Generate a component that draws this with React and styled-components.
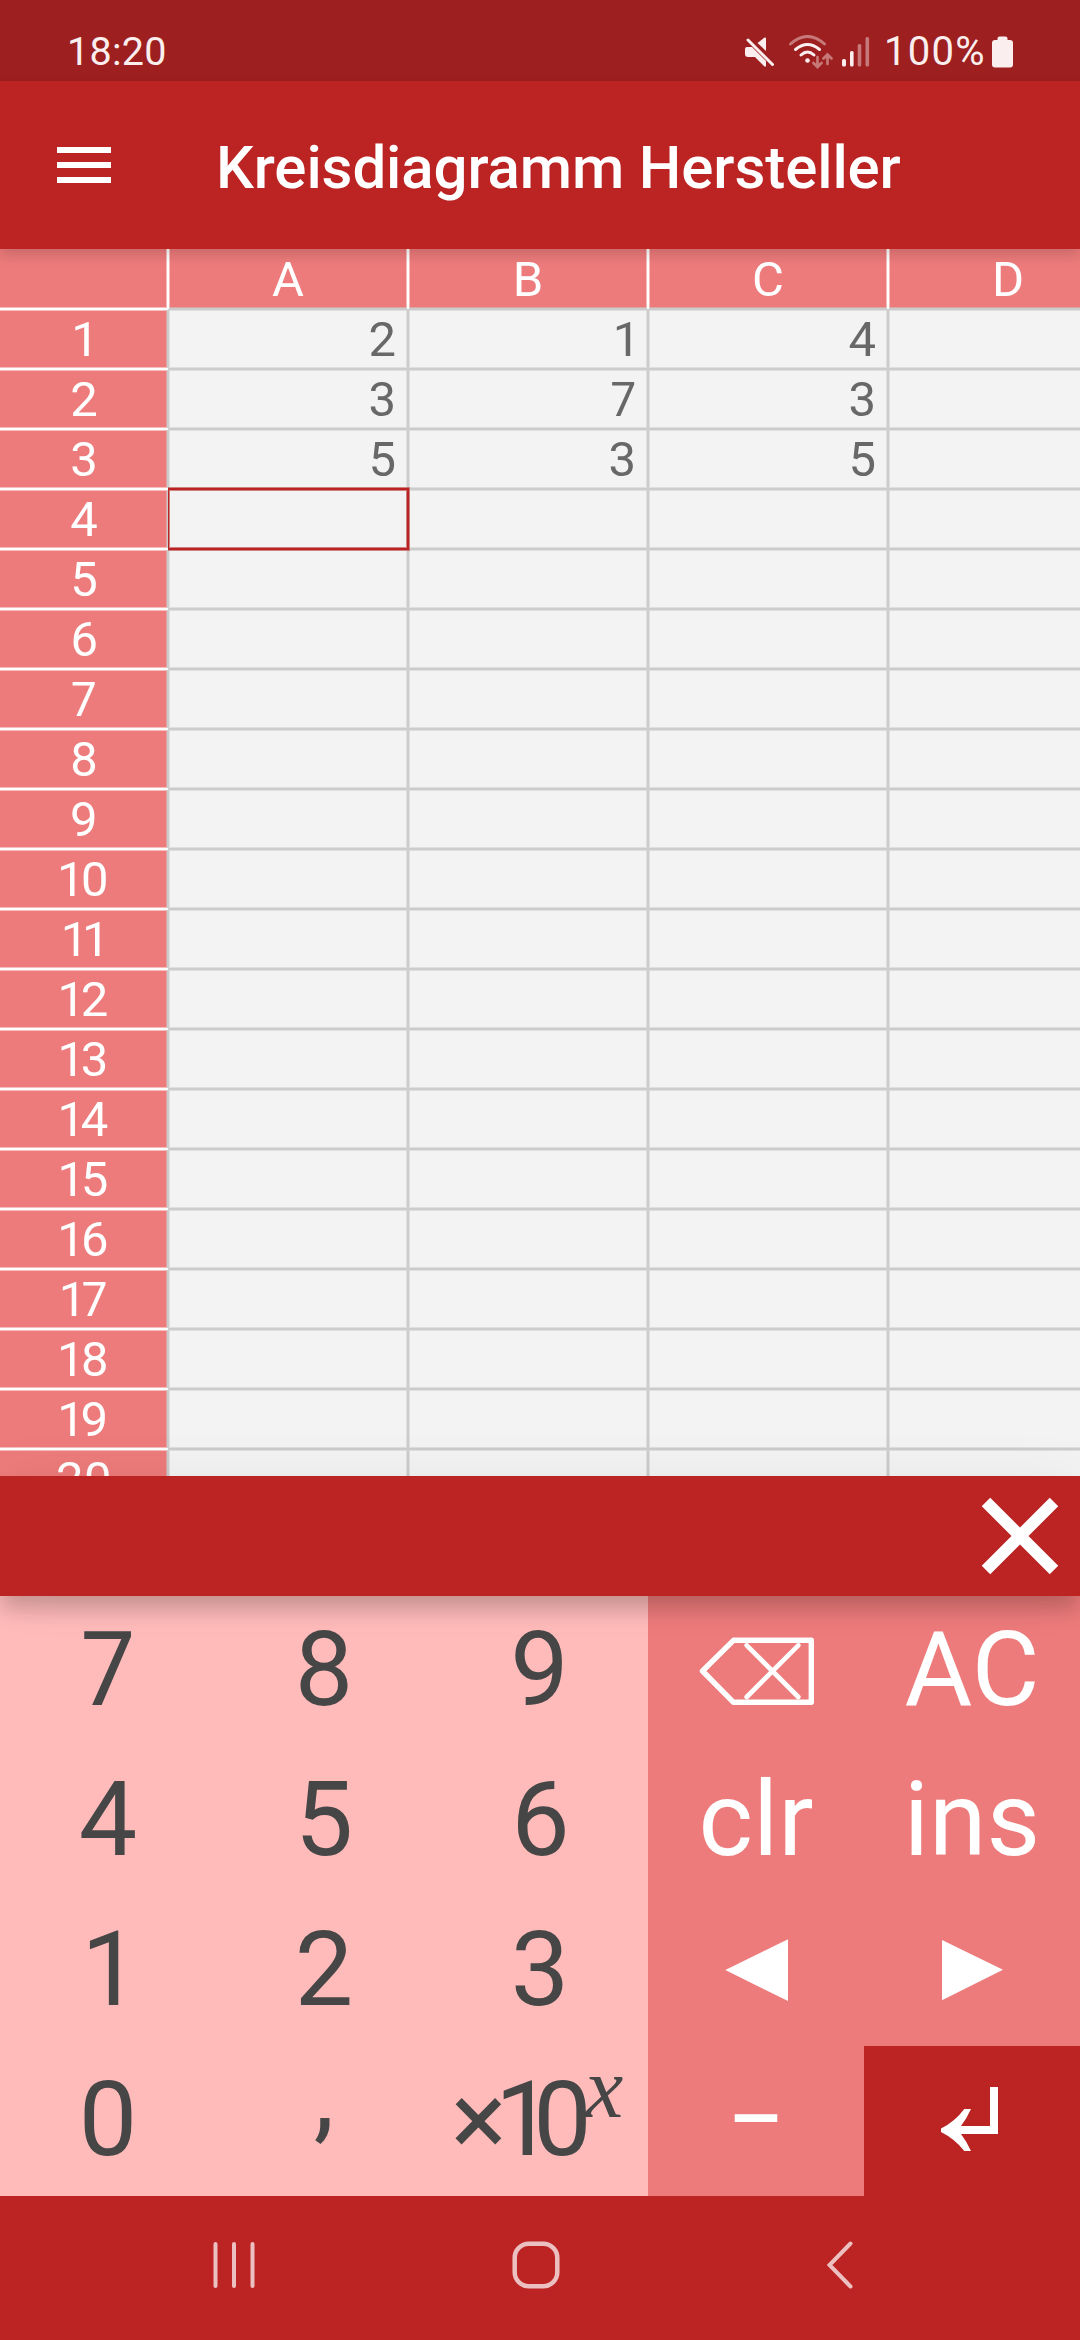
import React, { useState } from "react";
import styled, { createGlobalStyle, css } from "styled-components";

const GlobalStyle = createGlobalStyle`
  body {
    margin: 0;
    background: #bc2323;
  }

  * {
    box-sizing: border-box;
  }
`;

const COLUMNS = ["A", "B", "C", "D"];
const ROW_COUNT = 20;

// values of the filled rows, the rest of the sheet is empty
const DATA = [
  ["2", "1", "4"],
  ["3", "7", "3"],
  ["5", "3", "5"],
];

const NUMBER_KEYS = ["7", "8", "9", "4", "5", "6", "1", "2", "3", "0"];

function StatusBar() {
  return (
    <Status>
      <Clock>18:20</Clock>
      <StatusIcons>
        <svg width="30" height="30" viewBox="0 0 30 30" fill="#faeeee">
          <path d="M12.500 6 19.500 0.500Q21 0 21 1.500V14Z" />
          <path d="M3 3 27.500 27.500" stroke="#9d1f1f" strokeWidth="6" />
          <path d="M2 10H7L21 24V29.500H19.500L10 20H3Q0 20 0 17V12Q0 10 2 10Z" />
          <path d="M3 3 27.500 27.500" stroke="#faeeee" strokeWidth="3" strokeLinecap="round" />
        </svg>
        <WifiIcon width="44" height="34" viewBox="0 0 44 34" fill="none" strokeLinecap="round">
          <path d="M1.500 9Q18.500 -6 35.500 9" stroke="#c77878" strokeWidth="3" />
          <path d="M6.500 14.500Q18.500 4.500 30.500 14.500" stroke="#faeeee" strokeWidth="3" />
          <path d="M12 20Q18.500 14 25 20" stroke="#faeeee" strokeWidth="3" />
          <circle cx="18.500" cy="25.500" r="2.300" fill="#faeeee" />
          <path
            d="M28.500 22V31.500M24.500 28 28.500 32 32.500 28M38.500 29V19.500M34.500 23.500 38.500 19.500 42.500 23.500"
            stroke="#c77878"
            strokeWidth="2.700"
          />
        </WifiIcon>
        <SignalIcon width="28" height="30" viewBox="0 0 28 30">
          <rect x="0" y="22" width="4" height="7.500" rx="1.500" fill="#faeeee" />
          <rect x="8" y="14" width="3.600" height="15.500" rx="1.500" fill="#faeeee" />
          <rect x="15.700" y="7" width="3.600" height="22.500" rx="1.500" fill="#c77878" />
          <rect x="23.500" y="0" width="3.600" height="29.500" rx="1.500" fill="#c77878" />
        </SignalIcon>
        <Percent>100%</Percent>
        <svg width="21" height="32" viewBox="0 0 21 32" fill="#faeeee">
          <rect x="5.500" y="0.500" width="10" height="8" rx="2" />
          <rect x="0" y="4" width="21" height="27.500" rx="3" />
        </svg>
      </StatusIcons>
    </Status>
  );
}

function Sheet() {
  // row and column of the cell that is being edited
  const [selected, setSelected] = useState({ row: 3, col: 0 });

  return (
    <Grid>
      <Corner />
      {COLUMNS.map((name) => (
        <ColumnHead key={name}>{name}</ColumnHead>
      ))}
      {Array.from({ length: ROW_COUNT }, (_, row) => (
        <React.Fragment key={row}>
          <RowHead>{row + 1}</RowHead>
          {COLUMNS.map((name, col) => (
            <Cell key={name} onClick={() => setSelected({ row, col })}>
              {DATA[row] && DATA[row][col]}
              {selected.row === row && selected.col === col && <Selection />}
            </Cell>
          ))}
        </React.Fragment>
      ))}
    </Grid>
  );
}

function Keypad() {
  return (
    <Keys>
      <NumberPad>
        {NUMBER_KEYS.map((key) => (
          <Key key={key}>{key}</Key>
        ))}
        <CommaKey>,</CommaKey>
        <PowerKey>
          <Times>×</Times>
          <Ten>10</Ten>
          <Exponent>x</Exponent>
        </PowerKey>
      </NumberPad>
      <ActionPad>
        <IconKey aria-label="backspace">
          <svg width="116" height="70" viewBox="0 0 116 70" fill="none" stroke="#fff">
            <path d="M4.500 35 35.500 4.300H113.300V66.300H35.500Z" strokeWidth="5.400" strokeLinejoin="round" />
            <path d="M48.700 9.300 100.300 61M100.300 9.300 48.700 61" strokeWidth="4.700" strokeLinecap="round" />
          </svg>
        </IconKey>
        <Key light>AC</Key>
        <Key light>clr</Key>
        <Key light>ins</Key>
        <IconKey aria-label="left">
          <svg width="64" height="64" viewBox="0 0 64 64" fill="#fff">
            <path d="M1.300 31 64 0.300V62Z" />
          </svg>
        </IconKey>
        <IconKey aria-label="right">
          <svg width="62" height="62" viewBox="0 0 62 62" fill="#fff">
            <path d="M1 0 62 29.800 1 60.200Z" />
          </svg>
        </IconKey>
        <MinusKey>−</MinusKey>
        <IconKey dark aria-label="enter">
          <svg width="62" height="70" viewBox="0 0 62 70" fill="#fff">
            <path d="M49 1H57V48H20Q26 56 30 65H23.300Q14 53 0 46V42.500Q14 35.500 23.300 23H30Q26 32 20 40H49Z" />
          </svg>
        </IconKey>
      </ActionPad>
    </Keys>
  );
}

function App() {
  return (
    <Screen>
      <GlobalStyle />
      <StatusBar />
      <Header>
        <Hamburger>
          <span />
          <span />
          <span />
        </Hamburger>
        <Title>Kreisdiagramm Hersteller</Title>
      </Header>
      <Sheet />
      <EditBar>
        <svg width="78" height="78" viewBox="0 0 78 78" stroke="#fff" strokeWidth="12">
          <path d="M5 5 73 73M73 5 5 73" />
        </svg>
      </EditBar>
      <Keypad />
      <NavBar>
        <svg width="42" height="48" viewBox="0 0 42 48" stroke="#ecc0c0" strokeWidth="4" strokeLinecap="round">
          <path d="M2.500 3V45M21 3V45M39.500 3V45" />
        </svg>
        <svg width="48" height="48" viewBox="0 0 48 48" fill="none" stroke="#ecc0c0" strokeWidth="4.500">
          <rect x="2.700" y="2.700" width="42.600" height="42.600" rx="14" />
        </svg>
        <BackIcon width="26" height="48" viewBox="0 0 26 48" fill="none" stroke="#ecc0c0" strokeWidth="4" strokeLinecap="round">
          <path d="M23.500 2.500 2.500 24 23.500 45.500" />
        </BackIcon>
      </NavBar>
    </Screen>
  );
}

const Screen = styled.div`
  width: 1080px;
  height: 2340px;
  display: flex;
  flex-direction: column;
  overflow: hidden;
  background: #bc2323;
  font-family: Roboto, sans-serif;
  color: #fff;
`;

const Status = styled.div`
  height: 81px;
  flex: none;
  display: flex;
  align-items: center;
  justify-content: space-between;
  padding: 22px 67px 0;
  background: #9d1f1f;
  color: #faeeee;
  font-size: 39.5px;
  line-height: 60px;
`;

const Clock = styled.span`
  letter-spacing: 0.3px;
`;

const StatusIcons = styled.div`
  display: flex;
  align-items: center;
`;

const WifiIcon = styled.svg`
  margin-left: 14px;
`;

const SignalIcon = styled.svg`
  margin-left: 9px;
`;

const Percent = styled.span`
  width: 104px;
  margin: 0 4px 0 14px;
  font-size: 40px;
  letter-spacing: 1.3px;
`;

const Header = styled.header`
  position: relative;
  z-index: 2;
  height: 168px;
  flex: none;
  display: flex;
  align-items: center;
  padding-left: 57px;
  background: #bc2323;
  box-shadow: 0 6px 12px rgba(0, 0, 0, 0.15);
`;

const Hamburger = styled.div`
  width: 54px;
  display: flex;
  flex-direction: column;
  gap: 9px;

  span {
    height: 6px;
    background: #fff;
  }
`;

const Title = styled.h1`
  margin: 5px 0 0 105px;
  font-size: 60px;
  font-weight: 500;
  line-height: 72px;
  letter-spacing: -0.1px;
  white-space: nowrap;
`;

const Grid = styled.div`
  height: 1227px;
  flex: none;
  display: grid;
  grid-template-columns: 168px repeat(4, 240px);
  grid-auto-rows: 60px;
  overflow: hidden;
  background: #f3f3f3;
  font-size: 49px;
  font-variant-numeric: proportional-nums;
  line-height: 62px;
`;

const head = css`
  height: 60px;
  background: #ed7b7b;
  text-align: center;
`;

// lines are three pixels wide, half of each belongs to the neighbour cell
const Corner = styled.div`
  ${head}
  box-shadow: inset -1px 0 #fff, inset 0 -1px #fff, inset -2px 0 #f6bdbd,
    inset 0 -2px #f6bdbd;
`;

const ColumnHead = styled.div`
  ${head}
  box-shadow: inset 1px 0 #fff, inset -1px 0 #fff, inset 0 -1px #ccc,
    inset 2px 0 #f6bdbd, inset -2px 0 #f6bdbd, inset 0 -2px #dca3a3;
`;

const RowHead = styled.div`
  ${head}
  box-shadow: inset 0 1px #fff, inset 0 -1px #fff, inset -1px 0 #ccc,
    inset 0 2px #f6bdbd, inset 0 -2px #f6bdbd, inset -2px 0 #dca3a3;
`;

const Cell = styled.div`
  position: relative;
  height: 60px;
  padding-right: 12px;
  text-align: right;
  color: #686868;
  box-shadow: inset 0 0 0 1px #ccc, inset 0 0 0 2px #dfdfdf;
`;

const Selection = styled.div`
  position: absolute;
  z-index: 1;
  inset: -1px -1px -1px 0;
  border: 2px solid #bc2323;
  border-left-width: 1px;
  box-shadow: 0 0 0 1px rgba(188, 35, 35, 0.5),
    inset 0 0 0 1px rgba(188, 35, 35, 0.5);
  clip-path: inset(-1px -1px -1px 0);
`;

const EditBar = styled.div`
  position: relative;
  z-index: 2;
  height: 120px;
  flex: none;
  display: flex;
  align-items: center;
  justify-content: flex-end;
  padding-right: 21px;
  background: #bc2323;
  box-shadow: 0 14px 20px -2px rgba(0, 0, 0, 0.2), 0 0 60px rgba(0, 0, 0, 0.05);
`;

const Keys = styled.div`
  height: 600px;
  flex: none;
  display: flex;
`;

const NumberPad = styled.div`
  display: grid;
  grid-template: repeat(4, 150px) / repeat(3, 216px);
  background: #ffbaba;
  font-variant-numeric: proportional-nums;
`;

const ActionPad = styled.div`
  display: grid;
  grid-template: repeat(4, 150px) / repeat(2, 216px);
  background: #ed7b7b;
`;

const Key = styled.div.withConfig({ shouldForwardProp: (prop) => prop !== "light" })`
  height: 150px;
  text-align: center;
  font-size: 104px;
  line-height: 148px;
  color: ${({ light }) => (light ? "#fff" : "#464646")};
`;

const CommaKey = styled(Key)`
  line-height: 96px;
`;

const MinusKey = styled(Key)`
  color: #fff;
  line-height: 148px;
`;

const PowerKey = styled(Key)`
  display: flex;
  padding-left: 19px;
`;

const Times = styled.span`
  width: 44px;
`;

const Ten = styled.span`
  width: 90px;
  letter-spacing: -12px;
`;

const Exponent = styled.i`
  font-family: "Liberation Serif", serif;
  font-size: 86px;
  line-height: 84px;
`;

const IconKey = styled.div.withConfig({ shouldForwardProp: (prop) => prop !== "dark" })`
  display: flex;
  align-items: center;
  justify-content: center;
  background: ${({ dark }) => (dark ? "#bc2323" : "transparent")};
`;

const NavBar = styled.nav`
  height: 144px;
  flex: none;
  display: flex;
  align-items: center;
  gap: 257px;
  padding: 0 0 6px 213px;
`;

const BackIcon = styled.svg`
  margin-left: 10px;
`;

export default App;
